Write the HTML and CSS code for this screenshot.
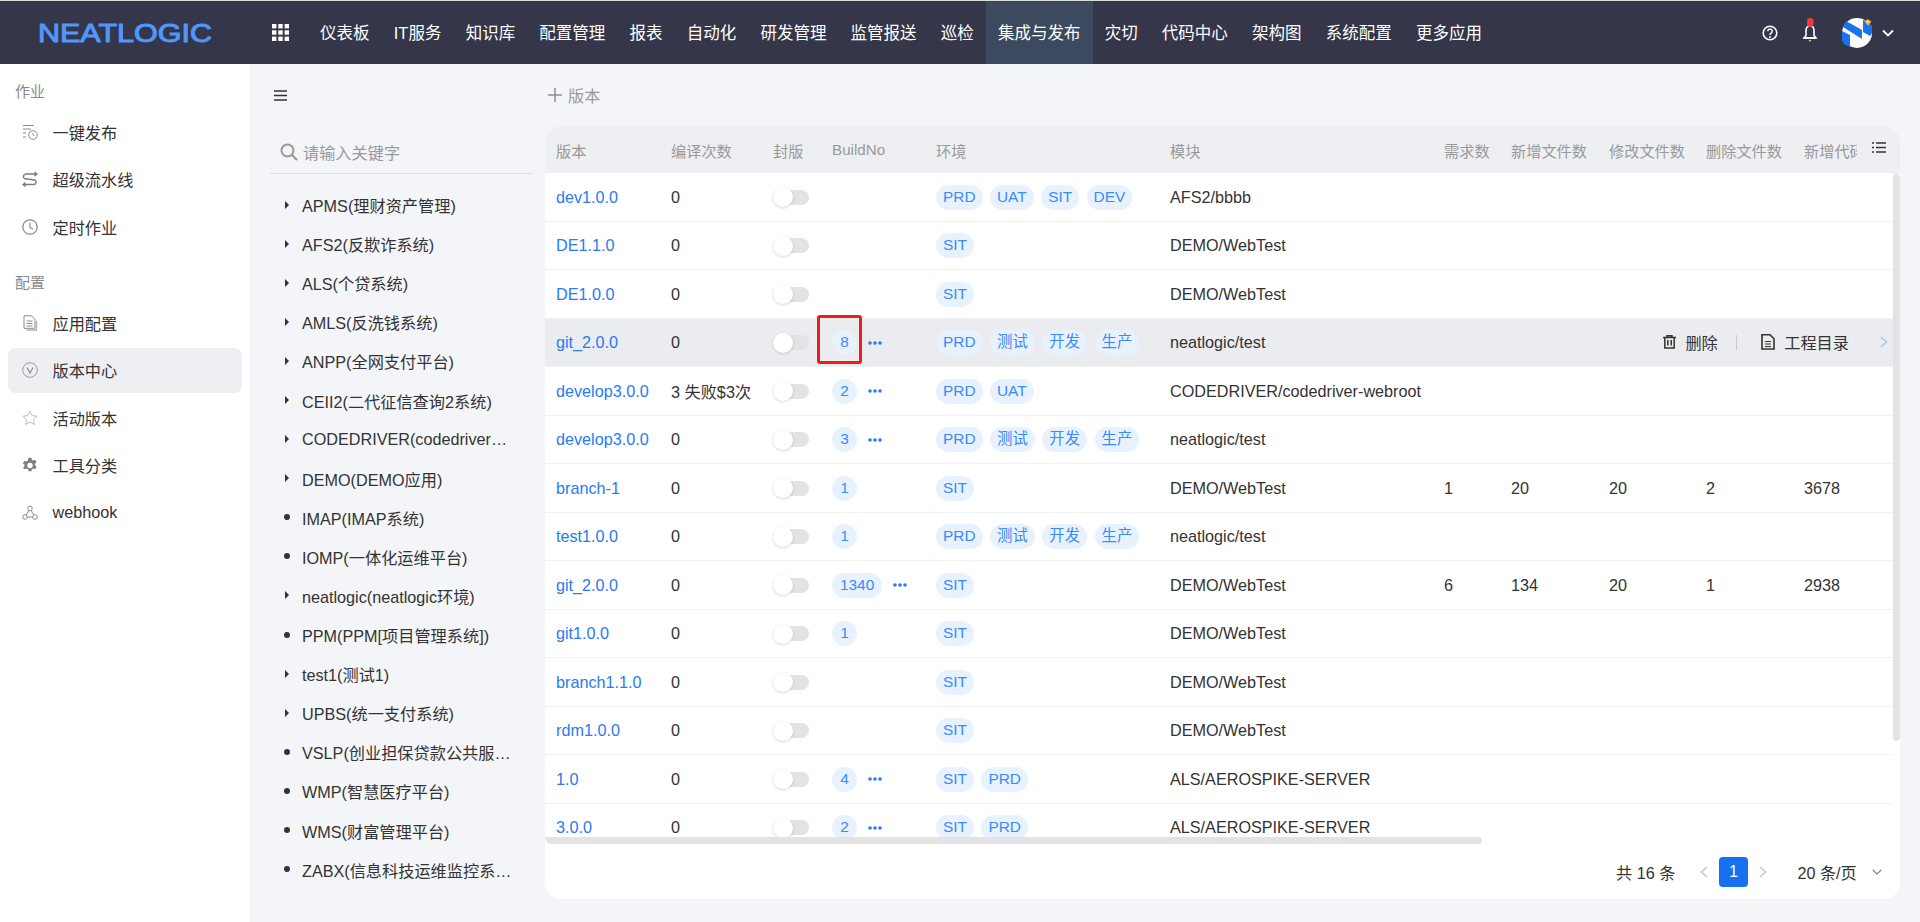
FILE: index.html
```html
<!DOCTYPE html>
<html lang="zh-CN">
<head>
<meta charset="utf-8">
<title>NEATLOGIC</title>
<link rel="stylesheet" href="styles.css">
</head>
<body>
<header class="topbar">
  <div class="logo-box"><svg class="logo" viewBox="0 0 174 18" width="174" height="18"><text x="0" y="18" textLength="174" lengthAdjust="spacingAndGlyphs" class="logo-text">NEATLOGIC</text></svg></div>
  <svg class="grid-icon" viewBox="0 0 17 17" width="17" height="17"><g fill="#fff"><rect x="0" y="0" width="4.4" height="4.4"/><rect x="6.3" y="0" width="4.4" height="4.4"/><rect x="12.6" y="0" width="4.4" height="4.4"/><rect x="0" y="6.3" width="4.4" height="4.4"/><rect x="6.3" y="6.3" width="4.4" height="4.4"/><rect x="12.6" y="6.3" width="4.4" height="4.4"/><rect x="0" y="12.6" width="4.4" height="4.4"/><rect x="6.3" y="12.6" width="4.4" height="4.4"/><rect x="12.6" y="12.6" width="4.4" height="4.4"/></g></svg>
  <nav class="nav">
    <a class="nav-item">仪表板</a><a class="nav-item">IT服务</a><a class="nav-item">知识库</a><a class="nav-item">配置管理</a><a class="nav-item">报表</a><a class="nav-item">自动化</a><a class="nav-item">研发管理</a><a class="nav-item">监管报送</a><a class="nav-item">巡检</a><a class="nav-item active">集成与发布</a><a class="nav-item">灾切</a><a class="nav-item">代码中心</a><a class="nav-item">架构图</a><a class="nav-item">系统配置</a><a class="nav-item">更多应用</a>
  </nav>
  <div class="top-tools">
    <svg class="help" viewBox="0 0 16 16" width="16" height="16"><circle cx="8" cy="8" r="6.8" fill="none" stroke="#fff" stroke-width="1.6"/><path d="M5.800 6.300a2.200 2.200 0 1 1 3.400 1.800c-.8.5-1.200.9-1.200 1.800" fill="none" stroke="#fff" stroke-width="1.500"/><circle cx="8" cy="11.900" r="1" fill="#fff"/></svg>
    <svg class="bell" viewBox="0 0 16 26" width="16" height="26"><path d="M8 8c-2.800 0-4 2-4 4.500v5L2 20h12l-2-2.500v-5C12 10 10.800 8 8 8z" fill="none" stroke="#fff" stroke-width="1.600"/><rect x="2" y="19" width="12" height="1.800" fill="#fff"/><path d="M6.500 22h3l-1.500 2z" fill="#f5b58a"/><rect x="5" y="0" width="6.500" height="9" rx="3.200" fill="#ee3b3f"/></svg>
    <svg class="avatar" viewBox="0 0 30 30" width="30" height="30"><ellipse cx="15" cy="15" rx="15" ry="15" fill="#fff"/><path d="M1 9l19 12V12L4 3zM0 13v9l2 4 6 3V17zM21 2v12l7 4 2-3V8l-3-4z" fill="#1a73ee"/><path d="M25.500 1l4 2.500-3.500 4.500-3.500-4.500z" fill="#f5a623"/><circle cx="25.800" cy="3.800" r="1.100" fill="#fff3d6"/></svg>
    <svg class="caret" viewBox="0 0 12 8" width="12" height="8"><path d="M1 1.500l5 5 5-5" fill="none" stroke="#fff" stroke-width="1.800"/></svg>
  </div>
</header>

<div class="layout">
  <aside class="sidebar">
    <div class="side-label">作业</div>
    <a class="side-item"><svg class="side-icon" viewBox="0 0 16 16"><path d="M1 1.500h11M1 5h8M1 9h3M1 13h3" fill="none" stroke="#8c8c8c" stroke-width="1"/><circle cx="11" cy="11" r="4.300" fill="none" stroke="#8c8c8c"/><path d="M11 8.800V11l1.500 1" fill="none" stroke="#8c8c8c"/></svg>一键发布</a>
    <a class="side-item"><svg class="side-icon" viewBox="0 0 16 16"><path d="M15 3H4a2.500 2.500 0 0 0-1 4.800L13 9a2.500 2.500 0 0 1-1 4.500H1M12.500 1l2.500 2-2.500 2M3.500 11.500L1 13.500l2.500 2" fill="none" stroke="#7d7d7d" stroke-width="1.400"/></svg>超级流水线</a>
    <a class="side-item"><svg class="side-icon" viewBox="0 0 16 16"><circle cx="8" cy="8" r="7.200" fill="none" stroke="#8c8c8c" stroke-width="1.300"/><path d="M8 3.800V8.500l3 1.800" fill="none" stroke="#8c8c8c" stroke-width="1.200"/></svg>定时作业</a>
    <div class="side-label second">配置</div>
    <a class="side-item"><svg class="side-icon" viewBox="0 0 16 16"><path d="M2 .8h7.500L13 4.300v9H2z" fill="none" stroke="#8c8c8c"/><path d="M4.500 6h6M4.500 8.500h6M4.500 11h6" stroke="#8c8c8c"/><path d="M14.500 6v9H4.500" fill="none" stroke="#b0b0b0" stroke-width="1.300"/></svg>应用配置</a>
    <a class="side-item on"><svg class="side-icon" viewBox="0 0 16 16"><circle cx="8" cy="8" r="7.300" fill="none" stroke="#9a9a9a"/><path d="M5 5.500l3 5.500 3-5.500" fill="none" stroke="#8c8c8c" stroke-width="1.200"/></svg>版本中心</a>
    <a class="side-item"><svg class="side-icon" viewBox="0 0 16 16"><path d="M8 1l2.100 4.600 5 .6-3.700 3.400 1 5L8 12.100 3.600 14.600l1-5L.9 6.200l5-.6z" fill="none" stroke="#bdbdbd"/></svg>活动版本</a>
    <a class="side-item"><svg class="side-icon" viewBox="0 0 16 16"><path fill-rule="evenodd" fill="#808080" d="M6.500.8h3l.4 2 1.300.7 1.900-.8 1.500 2.600-1.500 1.300v1.800l1.500 1.300-1.500 2.600-1.900-.8-1.300.7-.4 2h-3l-.4-2-1.300-.7-1.900.8L.9 10.700l1.500-1.300V7.600L.9 6.300l1.500-2.600 1.900.8 1.300-.7zM8 5.800a2.700 2.700 0 1 0 0 5.400 2.700 2.700 0 0 0 0-5.400z"/></svg>工具分类</a>
    <a class="side-item"><svg class="side-icon" viewBox="0 0 16 16"><g fill="none" stroke="#8c8c8c"><circle cx="8" cy="3.500" r="2.300"/><circle cx="3" cy="12" r="2.300"/><circle cx="13" cy="12" r="2.300"/><path d="M6.800 5.500L4.200 10M9.200 5.500l2.600 4.500M5.300 12h5.400"/></g></svg>webhook</a>
  </aside>

  <section class="tree-col">
    <div class="tree-top"><svg class="menu-icon" viewBox="0 0 13 11" width="13" height="11"><path d="M0 1h13M0 5.500h13M0 10h13" stroke="#333" stroke-width="1.500"/></svg></div>
    <div class="search"><svg class="search-icon" viewBox="0 0 18 18" width="18" height="18"><circle cx="7.500" cy="7.500" r="6" fill="none" stroke="#999" stroke-width="2"/><path d="M12 12l5 5" stroke="#999" stroke-width="2.200"/></svg><span>请输入关键字</span></div>
    <ul class="tree">
      <li class="tree-item branch"><span class="tree-text">APMS(理财资产管理)</span></li>
      <li class="tree-item branch"><span class="tree-text">AFS2(反欺诈系统)</span></li>
      <li class="tree-item branch"><span class="tree-text">ALS(个贷系统)</span></li>
      <li class="tree-item branch"><span class="tree-text">AMLS(反洗钱系统)</span></li>
      <li class="tree-item branch"><span class="tree-text">ANPP(全网支付平台)</span></li>
      <li class="tree-item branch"><span class="tree-text">CEII2(二代征信查询2系统)</span></li>
      <li class="tree-item branch"><span class="tree-text">CODEDRIVER(codedriver_webroot)</span></li>
      <li class="tree-item branch"><span class="tree-text">DEMO(DEMO应用)</span></li>
      <li class="tree-item leaf"><span class="tree-text">IMAP(IMAP系统)</span></li>
      <li class="tree-item leaf"><span class="tree-text">IOMP(一体化运维平台)</span></li>
      <li class="tree-item branch"><span class="tree-text">neatlogic(neatlogic环境)</span></li>
      <li class="tree-item leaf"><span class="tree-text">PPM(PPM[项目管理系统])</span></li>
      <li class="tree-item branch"><span class="tree-text">test1(测试1)</span></li>
      <li class="tree-item branch"><span class="tree-text">UPBS(统一支付系统)</span></li>
      <li class="tree-item leaf"><span class="tree-text">VSLP(创业担保贷款公共服务平台)</span></li>
      <li class="tree-item leaf"><span class="tree-text">WMP(智慧医疗平台)</span></li>
      <li class="tree-item leaf"><span class="tree-text">WMS(财富管理平台)</span></li>
      <li class="tree-item leaf"><span class="tree-text">ZABX(信息科技运维监控系统)</span></li>
    </ul>
  </section>

  <main class="content">
    <div class="toolbar"><svg class="plus" viewBox="0 0 14 14" width="14" height="14"><path d="M7 0v14M0 7h14" stroke="#8f8f8f" stroke-width="1.500"/></svg><span>版本</span></div>
    <div class="card">
      <div class="table">
        <div class="thead">
          <div class="th">版本</div><div class="th">编译次数</div><div class="th">封版</div><div class="th">BuildNo</div><div class="th">环境</div><div class="th">模块</div><div class="th">需求数</div><div class="th">新增文件数</div><div class="th">修改文件数</div><div class="th">删除文件数</div><div class="th clip">新增代码行数</div>
          <div class="th-icon"><svg viewBox="0 0 14 11" width="14" height="11"><path d="M0 1h2M4 1h10M0 5.500h2M4 5.500h10M0 10h2M4 10h10" stroke="#333" stroke-width="1.500"/></svg></div>
        </div>

        <div class="row">
          <div class="td"><a class="link">dev1.0.0</a></div><div class="td">0</div><div class="td"><span class="switch"></span></div><div class="td"></div>
          <div class="td tags"><span class="tag">PRD</span><span class="tag">UAT</span><span class="tag">SIT</span><span class="tag">DEV</span></div>
          <div class="td">AFS2/bbbb</div><div class="td"></div><div class="td"></div><div class="td"></div><div class="td"></div><div class="td"></div>
        </div>
        <div class="row">
          <div class="td"><a class="link">DE1.1.0</a></div><div class="td">0</div><div class="td"><span class="switch"></span></div><div class="td"></div>
          <div class="td tags"><span class="tag">SIT</span></div>
          <div class="td">DEMO/WebTest</div><div class="td"></div><div class="td"></div><div class="td"></div><div class="td"></div><div class="td"></div>
        </div>
        <div class="row">
          <div class="td"><a class="link">DE1.0.0</a></div><div class="td">0</div><div class="td"><span class="switch"></span></div><div class="td"></div>
          <div class="td tags"><span class="tag">SIT</span></div>
          <div class="td">DEMO/WebTest</div><div class="td"></div><div class="td"></div><div class="td"></div><div class="td"></div><div class="td"></div>
        </div>
        <div class="row hover">
          <div class="td"><a class="link">git_2.0.0</a></div><div class="td">0</div><div class="td"><span class="switch"></span></div>
          <div class="td"><span class="tag build marked">8</span><svg class="dots" viewBox="0 0 14 4" width="14" height="4"><circle cx="2" cy="2" r="1.800"/><circle cx="7" cy="2" r="1.800"/><circle cx="12" cy="2" r="1.800"/></svg></div>
          <div class="td tags"><span class="tag">PRD</span><span class="tag">测试</span><span class="tag">开发</span><span class="tag">生产</span></div>
          <div class="td">neatlogic/test</div><div class="td"></div><div class="td"></div><div class="td"></div><div class="td"></div><div class="td"></div>
          <div class="row-actions">
            <span class="action"><svg viewBox="0 0 13 14" width="13" height="14"><path d="M0 2.500h13M4 2.500V.8h5v1.700M1.800 2.500V13h9.400V2.500M4.800 5v5.500M8.200 5v5.500" fill="none" stroke="#333" stroke-width="1.500"/></svg>删除</span>
            <span class="sep"></span>
            <span class="action"><svg viewBox="0 0 14 16" width="14" height="16"><path d="M1 .8h8l4 4V15H1z" fill="none" stroke="#333" stroke-width="1.600"/><path d="M4 7.500h6M4 10h6M4 12.500h6" stroke="#333" stroke-width="1.200"/></svg>工程目录</span>
            <svg class="row-next" viewBox="0 0 8 12" width="8" height="12"><path d="M1 1l5.500 5L1 11" fill="none" stroke="#a6c7f5" stroke-width="1.500"/></svg>
          </div>
        </div>
        <div class="row">
          <div class="td"><a class="link">develop3.0.0</a></div><div class="td">3 失败$3次</div><div class="td"><span class="switch"></span></div>
          <div class="td"><span class="tag build">2</span><svg class="dots" viewBox="0 0 14 4" width="14" height="4"><circle cx="2" cy="2" r="1.800"/><circle cx="7" cy="2" r="1.800"/><circle cx="12" cy="2" r="1.800"/></svg></div>
          <div class="td tags"><span class="tag">PRD</span><span class="tag">UAT</span></div>
          <div class="td nowrap">CODEDRIVER/codedriver-webroot</div><div class="td"></div><div class="td"></div><div class="td"></div><div class="td"></div><div class="td"></div>
        </div>
        <div class="row">
          <div class="td"><a class="link">develop3.0.0</a></div><div class="td">0</div><div class="td"><span class="switch"></span></div>
          <div class="td"><span class="tag build">3</span><svg class="dots" viewBox="0 0 14 4" width="14" height="4"><circle cx="2" cy="2" r="1.800"/><circle cx="7" cy="2" r="1.800"/><circle cx="12" cy="2" r="1.800"/></svg></div>
          <div class="td tags"><span class="tag">PRD</span><span class="tag">测试</span><span class="tag">开发</span><span class="tag">生产</span></div>
          <div class="td">neatlogic/test</div><div class="td"></div><div class="td"></div><div class="td"></div><div class="td"></div><div class="td"></div>
        </div>
        <div class="row">
          <div class="td"><a class="link">branch-1</a></div><div class="td">0</div><div class="td"><span class="switch"></span></div>
          <div class="td"><span class="tag build">1</span></div>
          <div class="td tags"><span class="tag">SIT</span></div>
          <div class="td">DEMO/WebTest</div><div class="td">1</div><div class="td">20</div><div class="td">20</div><div class="td">2</div><div class="td">3678</div>
        </div>
        <div class="row">
          <div class="td"><a class="link">test1.0.0</a></div><div class="td">0</div><div class="td"><span class="switch"></span></div>
          <div class="td"><span class="tag build">1</span></div>
          <div class="td tags"><span class="tag">PRD</span><span class="tag">测试</span><span class="tag">开发</span><span class="tag">生产</span></div>
          <div class="td">neatlogic/test</div><div class="td"></div><div class="td"></div><div class="td"></div><div class="td"></div><div class="td"></div>
        </div>
        <div class="row">
          <div class="td"><a class="link">git_2.0.0</a></div><div class="td">0</div><div class="td"><span class="switch"></span></div>
          <div class="td"><span class="tag build">1340</span><svg class="dots" viewBox="0 0 14 4" width="14" height="4"><circle cx="2" cy="2" r="1.800"/><circle cx="7" cy="2" r="1.800"/><circle cx="12" cy="2" r="1.800"/></svg></div>
          <div class="td tags"><span class="tag">SIT</span></div>
          <div class="td">DEMO/WebTest</div><div class="td">6</div><div class="td">134</div><div class="td">20</div><div class="td">1</div><div class="td">2938</div>
        </div>
        <div class="row">
          <div class="td"><a class="link">git1.0.0</a></div><div class="td">0</div><div class="td"><span class="switch"></span></div>
          <div class="td"><span class="tag build">1</span></div>
          <div class="td tags"><span class="tag">SIT</span></div>
          <div class="td">DEMO/WebTest</div><div class="td"></div><div class="td"></div><div class="td"></div><div class="td"></div><div class="td"></div>
        </div>
        <div class="row">
          <div class="td"><a class="link">branch1.1.0</a></div><div class="td">0</div><div class="td"><span class="switch"></span></div><div class="td"></div>
          <div class="td tags"><span class="tag">SIT</span></div>
          <div class="td">DEMO/WebTest</div><div class="td"></div><div class="td"></div><div class="td"></div><div class="td"></div><div class="td"></div>
        </div>
        <div class="row">
          <div class="td"><a class="link">rdm1.0.0</a></div><div class="td">0</div><div class="td"><span class="switch"></span></div><div class="td"></div>
          <div class="td tags"><span class="tag">SIT</span></div>
          <div class="td">DEMO/WebTest</div><div class="td"></div><div class="td"></div><div class="td"></div><div class="td"></div><div class="td"></div>
        </div>
        <div class="row">
          <div class="td"><a class="link">1.0</a></div><div class="td">0</div><div class="td"><span class="switch"></span></div>
          <div class="td"><span class="tag build">4</span><svg class="dots" viewBox="0 0 14 4" width="14" height="4"><circle cx="2" cy="2" r="1.800"/><circle cx="7" cy="2" r="1.800"/><circle cx="12" cy="2" r="1.800"/></svg></div>
          <div class="td tags"><span class="tag">SIT</span><span class="tag">PRD</span></div>
          <div class="td">ALS/AEROSPIKE-SERVER</div><div class="td"></div><div class="td"></div><div class="td"></div><div class="td"></div><div class="td"></div>
        </div>
        <div class="row">
          <div class="td"><a class="link">3.0.0</a></div><div class="td">0</div><div class="td"><span class="switch"></span></div>
          <div class="td"><span class="tag build">2</span><svg class="dots" viewBox="0 0 14 4" width="14" height="4"><circle cx="2" cy="2" r="1.800"/><circle cx="7" cy="2" r="1.800"/><circle cx="12" cy="2" r="1.800"/></svg></div>
          <div class="td tags"><span class="tag">SIT</span><span class="tag">PRD</span></div>
          <div class="td">ALS/AEROSPIKE-SERVER</div><div class="td"></div><div class="td"></div><div class="td"></div><div class="td"></div><div class="td"></div>
        </div>
        <div class="scroll-v"></div>
        <div class="scroll-h"></div>
      </div>
      <div class="pager">
        <span class="total">共 16 条</span>
        <svg class="page-arrow" viewBox="0 0 8 12" width="8" height="12"><path d="M7 1L1.500 6 7 11" fill="none" stroke="#c8c8c8" stroke-width="1.600"/></svg>
        <span class="page-num">1</span>
        <svg class="page-arrow" viewBox="0 0 8 12" width="8" height="12"><path d="M1 1l5.500 5L1 11" fill="none" stroke="#c8c8c8" stroke-width="1.600"/></svg>
        <span class="page-size">20 条/页</span>
        <svg class="page-caret" viewBox="0 0 10 6" width="10" height="6"><path d="M.7.700L5 5 9.300.7" fill="none" stroke="#8a8f99" stroke-width="1.300"/></svg>
      </div>
    </div>
  </main>
</div>
</body>
</html>
```

FILE: styles.css
```css
* { box-sizing: border-box; }
html, body { margin: 0; height: 100%; }
body {
  width: 1920px;
  height: 922px;
  overflow: hidden;
  background: #f4f5f9;
  color: #333;
  font-family: "Liberation Sans", "Noto Sans CJK SC", sans-serif;
  font-size: 16.2px;
}
a { color: inherit; text-decoration: none; }
ul { list-style: none; margin: 0; padding: 0; }

/* top bar */
.topbar {
  height: 64px;
  display: flex;
  align-items: center;
  background: #353649;
  border-top: 1px solid #d9d9d6;
  color: #fff;
}
.logo-box { width: 272px; padding-left: 38px; display: flex; align-items: center; }
.logo { display: block; overflow: visible; }
.logo-text {
  font-family: "Liberation Sans", sans-serif;
  font-size: 25px;
  fill: #4f97fb;
  stroke: #4f97fb;
  stroke-width: 1px;
}
.grid-icon { flex: none; margin-top: -1px; }
.nav { display: flex; height: 100%; margin-left: 19px; font-size: 16.5px; }
.nav-item {
  padding: 1px 12.100px 0;
  display: flex;
  align-items: center;
  white-space: nowrap;
  color: #fff;
  line-height: 1;
}
.nav-item.active { background: #3c4a60; }
.top-tools {
  margin-left: auto;
  display: flex;
  align-items: center;
  padding-right: 26px;
}
.help { margin-right: 24px; }
.bell { margin-right: 24px; margin-top: -4px; }
.avatar { margin-right: 10px; }

/* layout */
.layout { display: flex; height: 858px; }
.sidebar {
  width: 250px;
  flex: none;
  background: #fff;
  padding: 16px 8px 0;
  display: flex;
  flex-direction: column;
  gap: 2.5px;
}
.side-label {
  height: 24px;
  line-height: 24px;
  padding-left: 7px;
  font-size: 15px;
  color: #8a8a8a;
  margin-bottom: 2.5px;
}
.side-label.second { margin-top: 19px; margin-bottom: 3px; }
.side-item {
  height: 45px;
  display: flex;
  align-items: center;
  border-radius: 8px;
  padding-left: 14px;
  color: #333;
}
.side-item.on { background: #eeeff3; }
.side-icon { width: 16px; height: 16px; margin-right: 14.500px; flex: none; }

/* tree */
.tree-col { width: 295px; flex: none; padding: 0 12px 0 20px; }
.tree-top { height: 62px; padding: 26px 0 0 4px; }
.menu-icon { display: block; }
.search {
  height: 48px;
  display: flex;
  align-items: center;
  border-bottom: 1px solid #dfe1e6;
  padding: 5px 0 0 10px;
  color: #9a9a9a;
}
.search-icon { margin-right: 5px; flex: none; }
.tree { padding-top: 11.500px; }
.tree-item {
  position: relative;
  height: 39.100px;
  display: flex;
  align-items: center;
  padding-left: 32px;
}
.tree-text {
  max-width: 214px;
  white-space: nowrap;
  overflow: hidden;
  text-overflow: ellipsis;
  color: #333;
}
.tree-item::before { content: ""; position: absolute; }
.branch::before {
  left: 15px;
  top: 15px;
  border-left: 4.500px solid #333;
  border-top: 4.500px solid transparent;
  border-bottom: 4.500px solid transparent;
}
.leaf::before {
  left: 14px;
  top: 16px;
  width: 6px;
  height: 6px;
  border-radius: 50%;
  background: #333;
}

/* content */
.content { width: 1355px; flex: none; padding-right: 20px; }
.toolbar {
  height: 62px;
  display: flex;
  align-items: center;
  padding: 0 0 0 3px;
  color: #999;
}
.plus { margin-right: 6px; }
.card {
  width: 1355px;
  height: 773px;
  background: #fff;
  border-radius: 16px;
  overflow: hidden;
  display: flex;
  flex-direction: column;
}
.table {
  position: relative;
  height: 718px;
  overflow: hidden;
  flex: none;
}
.thead {
  height: 48px;
  margin-bottom: -1px;
  padding-bottom: 1px;
  background: #eeeff3;
  display: grid;
  grid-template-columns: 115px 102px 59px 104px 234px 274px 67px 98px 97px 98px 64px 43px;
  align-items: center;
  font-size: 15.2px;
  color: #999;
}
.th { padding-left: 11px; white-space: nowrap; }
.th.clip { overflow: hidden; }
.th-icon { padding-left: 15px; height: 24px; }
.th-icon svg { display: block; margin-top: 4px; }
.row {
  position: relative;
  width: 1348px;
  height: 48.500px;
  padding-top: 1px;
  display: grid;
  grid-template-columns: 115px 102px 59px 104px 234px 274px 67px 98px 97px 98px 100px;
  align-items: center;
  border-bottom: 1px solid #f0f1f3;
  background: #fff;
}
.row.hover { background: #ebecf0; z-index: 1; }
.td { padding-left: 11px; display: flex; align-items: center; white-space: nowrap; min-width: 0; }
.link { color: #2a7bf3; }
.switch {
  position: relative;
  display: block;
  width: 36px;
  height: 15px;
  border-radius: 8px;
  background: #e2e3e6;
}
.switch::before {
  content: "";
  position: absolute;
  left: 0;
  top: -2.500px;
  width: 20px;
  height: 20px;
  border-radius: 50%;
  background: #fff;
  box-shadow: 0 1px 3px rgba(0, 0, 0, .16);
}
.tags { gap: 7.500px; }
.tag {
  height: 25px;
  line-height: 24px;
  padding: 0 7px;
  border-radius: 13px;
  background: #e8f1fe;
  color: #3a8bfb;
  font-size: 15.4px;
  white-space: nowrap;
}
.build { padding: 0 8px; min-width: 25px; text-align: center; position: relative; }
.marked::after {
  content: "";
  position: absolute;
  box-sizing: border-box;
  left: -15px;
  top: -15px;
  width: 45px;
  height: 49px;
  border: 3px solid #f01c1c;
  border-radius: 3px;
}
.dots { margin-left: 11px; fill: #2a7bf3; flex: none; }
.row-actions {
  position: absolute;
  right: 5px;
  top: 0;
  bottom: 0;
  display: flex;
  align-items: center;
  color: #333;
}
.action { display: flex; align-items: center; }
.action svg { margin-right: 9px; flex: none; }
.sep { width: 1.500px; height: 15px; background: #c9cacd; margin: 0 24px 0 18px; }
.row-next { margin-left: 31px; }
.scroll-v {
  position: absolute;
  right: 0;
  top: 48px;
  width: 7px;
  height: 567px;
  border-radius: 4px;
  background: #e3e3e3;
  z-index: 2;
}
.scroll-h {
  position: absolute;
  left: 0;
  bottom: 0;
  width: 937px;
  height: 7px;
  border-radius: 0 4px 4px 7px;
  background: #e3e3e3;
  z-index: 2;
}

/* pager */
.pager {
  flex: 1;
  display: flex;
  align-items: center;
  padding: 0 18px 0 1071px;
}
.total { width: 84px; white-space: nowrap; }
.page-arrow { flex: none; }
.page-num {
  width: 30px;
  height: 30px;
  margin: 0 11px;
  border-radius: 4px;
  background: #1670f0;
  color: #fff;
  display: flex;
  align-items: center;
  justify-content: center;
}
.page-size { margin-left: 30px; white-space: nowrap; width: 75px; }
.page-caret { flex: none; }
```
